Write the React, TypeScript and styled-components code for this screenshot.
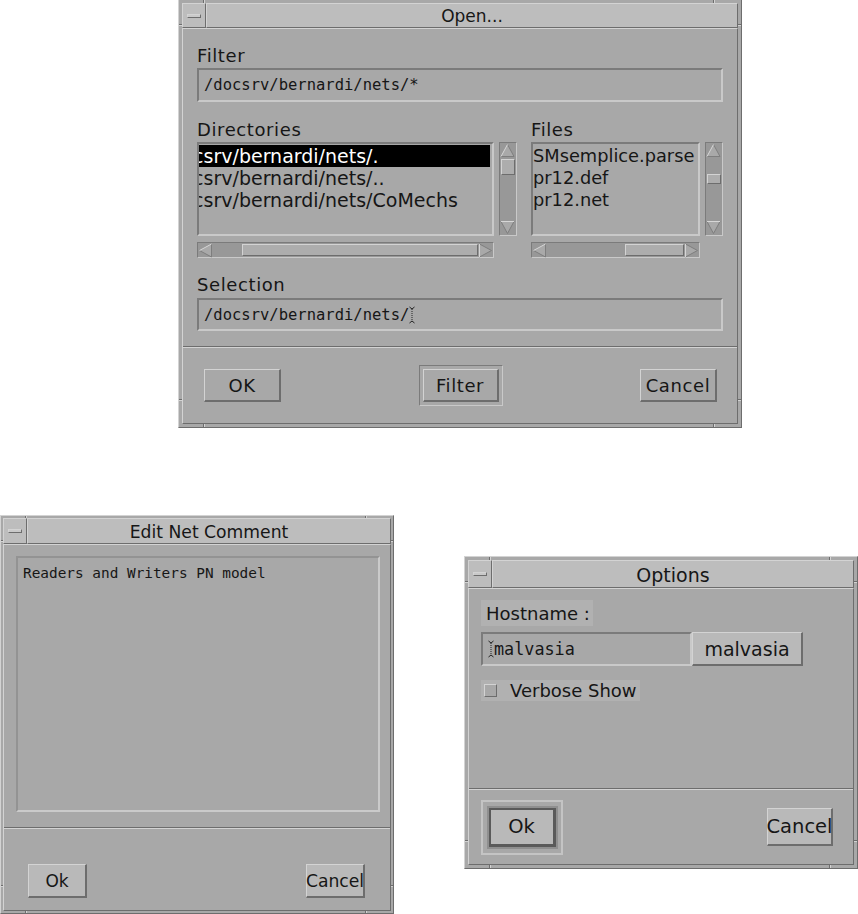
import React from "react";
import styled, { createGlobalStyle, css } from "styled-components";

const C = {
  face: "#a8a8a8",
  title: "#bdbdbd",
  hi: "#d3d3d3",
  lo: "#6d6d6d",
  inLo: "#7b7b7b",
  inHi: "#c9c9c9",
  trough: "#989898",
  btn: "#b9b9b9",
  pale: "#b1b1b1",
  ink: "#161616",
};

const GlobalStyle = createGlobalStyle`
  html, body {
    margin: 0;
    padding: 0;
    background: #ffffff;
  }
  body {
    font-family: "DejaVu Sans", "Liberation Sans", sans-serif;
    color: ${C.ink};
  }
`;

const raised = css`
  border-style: solid;
  border-color: ${C.hi} ${C.lo} ${C.lo} ${C.hi};
`;

const sunken = css`
  border-style: solid;
  border-color: ${C.inLo} ${C.inHi} ${C.inHi} ${C.inLo};
`;

const Desktop = styled.div`
  position: relative;
  width: 858px;
  height: 914px;
  overflow: hidden;
  background: #ffffff;
`;

// windows sit on a free desktop, so they are placed by coordinates
const Win = styled.section<{ $x: number; $y: number; $w: number; $h: number; $pad: number }>`
  position: absolute;
  left: ${(p) => p.$x}px;
  top: ${(p) => p.$y}px;
  width: ${(p) => p.$w}px;
  height: ${(p) => p.$h}px;
  box-sizing: border-box;
  display: flex;
  flex-direction: column;
  background: ${C.face};
  border-width: 1px;
  ${raised};
  padding: ${(p) => p.$pad}px;
`;

// resize-handle cuts in the window frame
const Notch = styled.span<{ $side: "top" | "bottom" | "left" | "right"; $at: number; $depth: number }>`
  position: absolute;
  background: ${C.lo};
  ${(p) =>
    p.$side === "top" || p.$side === "bottom"
      ? `left: ${p.$at}px; ${p.$side}: 0; width: 1px; height: ${p.$depth}px; box-shadow: 1px 0 0 ${C.hi};`
      : `top: ${p.$at}px; ${p.$side}: 0; height: 1px; width: ${p.$depth}px; box-shadow: 0 1px 0 ${C.hi};`}
`;

function FrameNotches({ w, h, depth }: { w: number; h: number; depth: number }) {
  const a = 24;
  return (
    <>
      <Notch $side="top" $at={a} $depth={depth} />
      <Notch $side="top" $at={w - a - 4} $depth={depth} />
      <Notch $side="bottom" $at={a} $depth={depth} />
      <Notch $side="bottom" $at={w - a - 4} $depth={depth} />
      <Notch $side="left" $at={a} $depth={depth} />
      <Notch $side="left" $at={h - a - 4} $depth={depth} />
      <Notch $side="right" $at={a} $depth={depth} />
      <Notch $side="right" $at={h - a - 4} $depth={depth} />
    </>
  );
}

const TitleBar = styled.header<{ $h: number }>`
  flex: none;
  height: ${(p) => p.$h}px;
  display: flex;
`;

const MenuBox = styled.div`
  width: 24px;
  box-sizing: border-box;
  border-width: 1px;
  ${raised};
  background: ${C.title};
  display: flex;
  align-items: center;
  justify-content: center;
`;

const MenuGlyph = styled.div`
  width: 14px;
  height: 4px;
  box-sizing: border-box;
  border-width: 1px;
  ${raised};
  background: #c9c9c9;
`;

const TitleText = styled.div<{ $fs: number }>`
  flex: 1;
  box-sizing: border-box;
  border-width: 1px;
  ${raised};
  background: ${C.title};
  display: flex;
  align-items: center;
  justify-content: center;
  font-size: ${(p) => p.$fs}px;
  padding-top: 1px;
`;

const Client = styled.div`
  flex: 1;
  min-height: 0;
  display: flex;
  flex-direction: column;
  box-sizing: border-box;
  border-width: 1px;
  ${raised};
`;

const Body = styled.div<{ $pl: number; $pr: number }>`
  display: flex;
  flex-direction: column;
  padding: 0 ${(p) => p.$pr}px 0 ${(p) => p.$pl}px;
`;

const Label = styled.div<{ $mt: number }>`
  margin-top: ${(p) => p.$mt}px;
  height: 20px;
  line-height: 20px;
  font-size: 18px;
  letter-spacing: 0.6px;
  white-space: nowrap;
`;

const Field = styled.div<{ $mt: number; $h: number; $w?: number; $fs: number }>`
  margin-top: ${(p) => p.$mt}px;
  height: ${(p) => p.$h}px;
  ${(p) => (p.$w ? `width: ${p.$w}px;` : "")}
  box-sizing: border-box;
  border-width: 2px;
  ${sunken};
  display: flex;
  align-items: center;
  padding-left: 5px;
  font-family: "DejaVu Sans Mono", "Liberation Mono", monospace;
  font-size: ${(p) => p.$fs}px;
  white-space: nowrap;
  overflow: hidden;
`;

const Separator = styled.div<{ $mt: number; $auto?: boolean }>`
  flex: none;
  margin-top: ${(p) => (p.$auto ? "auto" : `${p.$mt}px`)};
  height: 0;
  border-top: 1px solid ${C.lo};
  border-bottom: 1px solid ${C.hi};
`;

const ButtonRow = styled.div<{ $pl: number; $pr: number; $pt?: number; $h?: number }>`
  ${(p) => (p.$h ? `height: ${p.$h}px; flex: none;` : "flex: 1;")}
  display: flex;
  justify-content: space-between;
  align-items: ${(p) => (p.$pt !== undefined ? "flex-start" : "center")};
  padding: ${(p) => p.$pt ?? 0}px ${(p) => p.$pr}px 0 ${(p) => p.$pl}px;
`;

const PushButton = styled.div<{ $w: number; $h: number; $fs: number; $light?: boolean; $spaced?: boolean }>`
  width: ${(p) => p.$w}px;
  height: ${(p) => p.$h}px;
  box-sizing: border-box;
  flex: none;
  display: flex;
  align-items: center;
  justify-content: center;
  background: ${(p) => (p.$light ? C.btn : C.face)};
  border-width: 1px 2px 2px 1px;
  ${raised};
  font-size: ${(p) => p.$fs}px;
  letter-spacing: ${(p) => (p.$spaced ? "0.6px" : "0")};
  white-space: nowrap;
`;

const DefaultRing = styled.div<{ $w: number; $h: number; $heavy?: boolean }>`
  width: ${(p) => p.$w}px;
  height: ${(p) => p.$h}px;
  box-sizing: border-box;
  flex: none;
  display: flex;
  align-items: center;
  justify-content: center;
  border-width: ${(p) => (p.$heavy ? 2 : 1)}px;
  ${sunken};
  ${(p) =>
    p.$heavy &&
    css`
      border-color: #c4c4c4;
      & > div {
        border-width: 2px 3px 3px 2px;
        border-color: #5a5a5a;
        box-shadow: 0 0 0 2px #8f8f8f;
      }
    `}
`;

/* --- lists and scrollbars --- */

const ListsRow = styled.div`
  margin-top: 18px;
  display: flex;
  gap: 14px;
`;

const ListColumn = styled.div<{ $w?: number }>`
  ${(p) => (p.$w ? `width: ${p.$w}px; flex: none;` : "flex: 1;")}
  display: flex;
  flex-direction: column;
`;

const ListWithBar = styled.div`
  margin-top: 2px;
  display: flex;
  gap: 5px;
  height: 94px;
`;

const ListBox = styled.div`
  flex: 1;
  min-width: 0;
  box-sizing: border-box;
  border-width: 2px;
  ${sunken};
  overflow: hidden;
  padding-top: 1px;
`;

const ListRow = styled.div<{ $selected?: boolean; $fs: number; $shift?: number }>`
  height: 22px;
  line-height: 22px;
  margin-right: 2px;
  font-size: ${(p) => p.$fs}px;
  white-space: nowrap;
  text-indent: ${(p) => p.$shift ?? 0}px;
  background: ${(p) => (p.$selected ? "#000" : "transparent")};
  color: ${(p) => (p.$selected ? "#fff" : C.ink)};
`;

const HBarRow = styled.div<{ $gapRight: number }>`
  margin-top: 6px;
  margin-right: ${(p) => p.$gapRight}px;
`;

const ScrollTrack = styled.div<{ $vertical?: boolean }>`
  box-sizing: border-box;
  border-width: 1px;
  ${sunken};
  background: ${C.trough};
  display: flex;
  flex-direction: ${(p) => (p.$vertical ? "column" : "row")};
  ${(p) => (p.$vertical ? "width: 18px; height: 100%; flex: none;" : "height: 16px;")}
`;

const Trough = styled.div<{ $vertical?: boolean }>`
  flex: 1;
  display: flex;
  flex-direction: ${(p) => (p.$vertical ? "column" : "row")};
`;

const Thumb = styled.div<{ $vertical?: boolean; $start: number; $size?: number }>`
  box-sizing: border-box;
  border-width: 1px;
  ${raised};
  background: #adadad;
  ${(p) =>
    p.$vertical
      ? `margin-top: ${p.$start}px; height: ${p.$size}px; margin-left: 1px; margin-right: 1px;`
      : `margin-left: ${p.$start}px; ${p.$size ? `width: ${p.$size}px;` : "flex: 1;"} margin-top: 1px; margin-bottom: 1px;`}
`;

const ArrowBox = styled.svg`
  flex: none;
  display: block;
`;

function Arrow({ dir }: { dir: "up" | "down" | "left" | "right" }) {
  const pts = {
    up: "7.5,1.5 14,13.5 1,13.5",
    down: "1,1.5 14,1.5 7.5,13.5",
    left: "1.5,7.5 13.5,1 13.5,14",
    right: "1.5,1 1.5,14 13.5,7.5",
  }[dir];
  const lit = {
    up: "M1 13.5 L7.5 1.5",
    down: "M1 1.5 L14 1.5",
    left: "M13.5 1 L1.5 7.5",
    right: "M1.5 14 L1.5 1",
  }[dir];
  const shade = {
    up: "M7.5 1.5 L14 13.5 L1 13.5",
    down: "M14 1.5 L7.5 13.5 L1 1.5",
    left: "M1.5 7.5 L13.5 14 L13.5 1",
    right: "M1.5 1 L13.5 7.5 L1.5 14",
  }[dir];
  return (
    <ArrowBox width={15} height={15} viewBox="0 0 15 15">
      <polygon points={pts} fill="#a9a9a9" />
      <path d={shade} fill="none" stroke="#7e7e7e" strokeWidth="1" />
      <path d={lit} fill="none" stroke="#d6d6d6" strokeWidth="1" />
    </ArrowBox>
  );
}

function VScroll({ start, size }: { start: number; size: number }) {
  return (
    <ScrollTrack $vertical>
      <Arrow dir="up" />
      <Trough $vertical>
        <Thumb $vertical $start={start} $size={size} />
      </Trough>
      <Arrow dir="down" />
    </ScrollTrack>
  );
}

function HScroll({ start, size }: { start: number; size?: number }) {
  return (
    <ScrollTrack>
      <Arrow dir="left" />
      <Trough>
        <Thumb $start={start} $size={size} />
      </Trough>
      <Arrow dir="right" />
    </ScrollTrack>
  );
}

const CaretSvg = styled.svg`
  flex: none;
  display: block;
`;

function Caret() {
  return (
    <CaretSvg width="6" height="18" viewBox="0 0 6 18">
      <path d="M0.5 1 L3 3 L5.5 1 M0.5 17 L3 15 L5.5 17" stroke="#222" fill="none" strokeWidth="1" />
      <line x1="3" y1="3" x2="3" y2="15" stroke="#222" strokeWidth="1" strokeDasharray="1 1" />
    </CaretSvg>
  );
}

/* --- options dialog parts --- */

const HostLabel = styled.div`
  align-self: flex-start;
  margin-top: 11px;
  height: 26px;
  box-sizing: border-box;
  padding: 0 3px 0 5px;
  display: flex;
  align-items: center;
  background: ${C.pale};
  font-size: 18px;
  white-space: nowrap;
`;

const FieldRow = styled.div`
  margin-top: 6px;
  display: flex;
`;

const CheckRow = styled.div`
  align-self: flex-start;
  margin-top: 14px;
  height: 21px;
  width: 159px;
  box-sizing: border-box;
  display: flex;
  align-items: center;
  gap: 13px;
  padding-left: 3px;
  background: ${C.pale};
  font-size: 18px;
  white-space: nowrap;
`;

const CheckBox = styled.div`
  width: 13px;
  height: 13px;
  box-sizing: border-box;
  border-width: 1px;
  ${raised};
  background: ${C.face};
`;

const CommentArea = styled.div`
  margin: 11px 10px 0 12px;
  height: 256px;
  box-sizing: border-box;
  border: 2px solid;
  border-color: #939393 #cacaca #cacaca #939393;
  padding: 6px 5px;
  font-family: "DejaVu Sans Mono", "Liberation Mono", monospace;
  font-size: 14.4px;
  line-height: 18px;
`;

function Title({ text, h, fs }: { text: string; h: number; fs: number }) {
  return (
    <TitleBar $h={h}>
      <MenuBox>
        <MenuGlyph />
      </MenuBox>
      <TitleText $fs={fs}>{text}</TitleText>
    </TitleBar>
  );
}

function OpenDialog() {
  return (
    <Win $x={178} $y={-1} $w={564} $h={429} $pad={3}>
      <FrameNotches w={562} h={427} depth={3} />
      <Title text="Open..." h={25} fs={17} />
      <Client>
        <Body $pl={14} $pr={14}>
          <Label $mt={17}>Filter</Label>
          <Field $mt={2} $h={34} $fs={15.5}>
            /docsrv/bernardi/nets/*
          </Field>
          <ListsRow>
            <ListColumn $w={320}>
              <Label $mt={0}>Directories</Label>
              <ListWithBar>
                <ListBox>
                  <ListRow $fs={19} $shift={-36} $selected>
                    /docsrv/bernardi/nets/.
                  </ListRow>
                  <ListRow $fs={19} $shift={-36}>
                    /docsrv/bernardi/nets/..
                  </ListRow>
                  <ListRow $fs={19} $shift={-36}>
                    /docsrv/bernardi/nets/CoMechs
                  </ListRow>
                </ListBox>
                <VScroll start={1} size={16} />
              </ListWithBar>
              <HBarRow $gapRight={23}>
                <HScroll start={29} />
              </HBarRow>
            </ListColumn>
            <ListColumn>
              <Label $mt={0}>Files</Label>
              <ListWithBar>
                <ListBox>
                  <ListRow $fs={17.8}>SMsemplice.parse</ListRow>
                  <ListRow $fs={17.8}>pr12.def</ListRow>
                  <ListRow $fs={17.8}>pr12.net</ListRow>
                </ListBox>
                <VScroll start={16} size={10} />
              </ListWithBar>
              <HBarRow $gapRight={23}>
                <HScroll start={78} size={59} />
              </HBarRow>
            </ListColumn>
          </ListsRow>
          <Label $mt={17}>Selection</Label>
          <Field $mt={3} $h={33} $fs={15.5}>
            /docsrv/bernardi/nets/
            <Caret />
          </Field>
        </Body>
        <Separator $mt={15} />
        <ButtonRow $pl={21} $pr={20}>
          <PushButton $w={77} $h={33} $fs={18} $spaced>
            OK
          </PushButton>
          <DefaultRing $w={84} $h={41}>
            <PushButton $w={76} $h={33} $fs={18} $spaced>
              Filter
            </PushButton>
          </DefaultRing>
          <PushButton $w={77} $h={33} $fs={18} $spaced>
            Cancel
          </PushButton>
        </ButtonRow>
      </Client>
    </Win>
  );
}

function CommentDialog() {
  return (
    <Win $x={0} $y={515} $w={394} $h={399} $pad={2}>
      <FrameNotches w={392} h={397} depth={2} />
      <Title text="Edit Net Comment" h={26} fs={17.2} />
      <Client>
        <CommentArea>Readers and Writers PN model</CommentArea>
        <Separator $mt={15} />
        <ButtonRow $pl={24} $pr={25} $pt={35}>
          <PushButton $w={59} $h={34} $fs={17} $light>
            Ok
          </PushButton>
          <PushButton $w={59} $h={34} $fs={17.2} $light>
            Cancel
          </PushButton>
        </ButtonRow>
      </Client>
    </Win>
  );
}

function OptionsDialog() {
  return (
    <Win $x={464} $y={556} $w={394} $h={313} $pad={3}>
      <FrameNotches w={392} h={311} depth={3} />
      <Title text="Options" h={28} fs={19} />
      <Client>
        <Body $pl={12} $pr={12}>
          <HostLabel>Hostname :</HostLabel>
          <FieldRow>
            <Field $mt={0} $h={34} $w={211} $fs={16.8}>
              <Caret />
              malvasia
            </Field>
            <PushButton $w={111} $h={34} $fs={19} $light>
              malvasia
            </PushButton>
          </FieldRow>
          <CheckRow>
            <CheckBox />
            Verbose Show
          </CheckRow>
        </Body>
        <Separator $mt={0} $auto />
        <ButtonRow $pl={12} $pr={20} $h={74}>
          <DefaultRing $w={82} $h={55} $heavy>
            <PushButton $w={67} $h={39} $fs={19.5} $light>
              Ok
            </PushButton>
          </DefaultRing>
          <PushButton $w={66} $h={38} $fs={19.5} $light>
            Cancel
          </PushButton>
        </ButtonRow>
      </Client>
    </Win>
  );
}

export default function App() {
  return (
    <>
      <GlobalStyle />
      <Desktop>
        <OpenDialog />
        <CommentDialog />
        <OptionsDialog />
      </Desktop>
    </>
  );
}
